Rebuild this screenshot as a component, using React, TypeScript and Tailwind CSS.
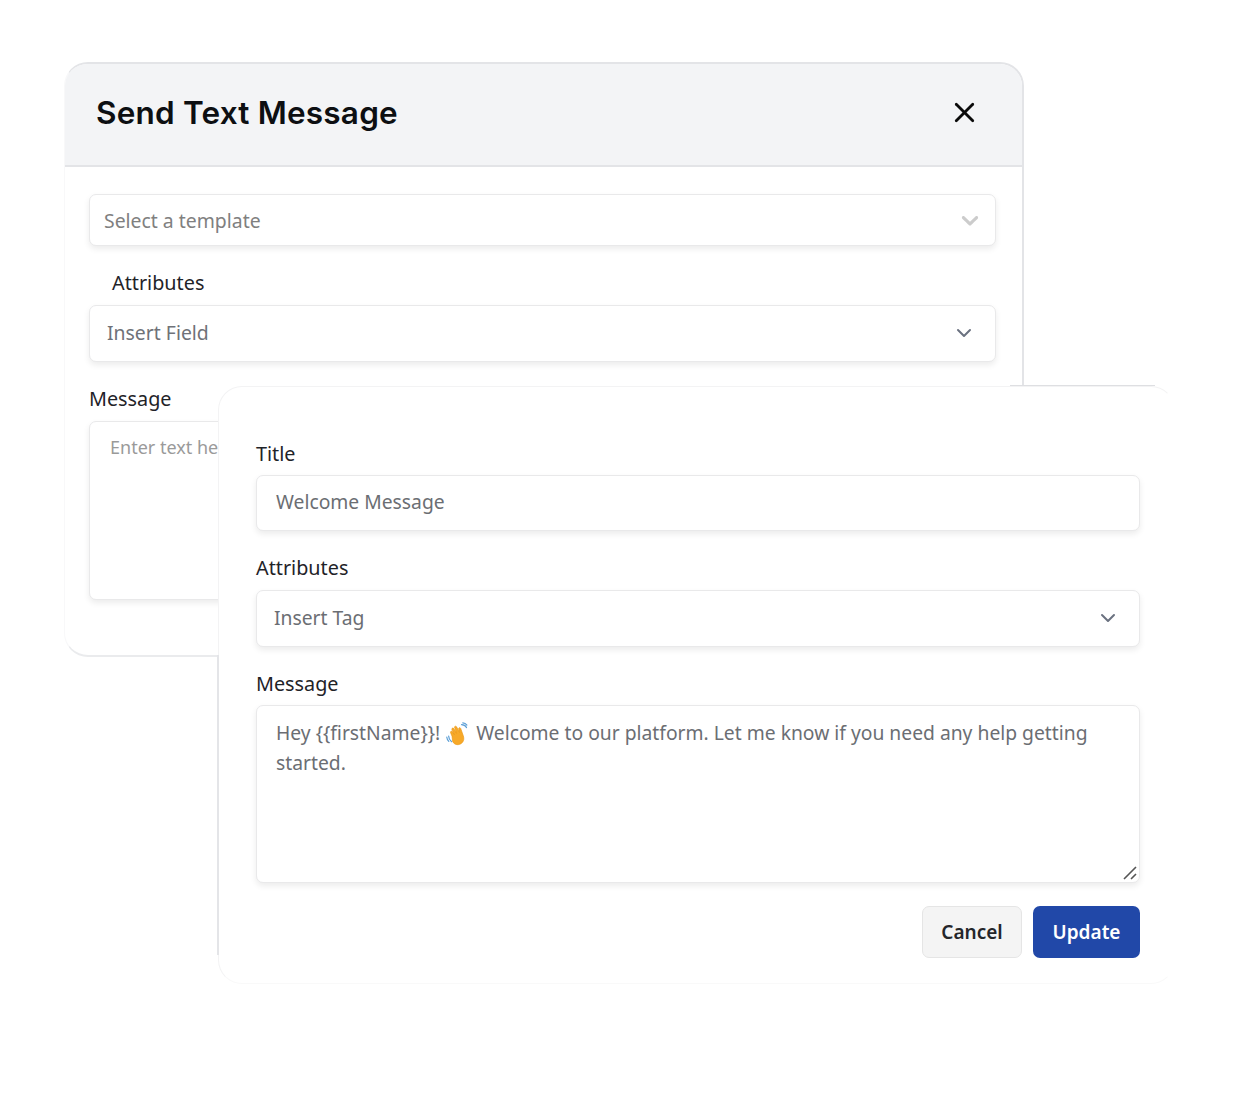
import { ChevronDown, X } from "lucide-react";
import React from "react";

const WaveIcon = () => (
  <svg
    viewBox="0 0 24 24"
    className="mx-[6px] inline-block h-[24px] w-[24px] align-[-6px]"
    aria-hidden="true"
  >
    {/* motion lines */}
    <path d="M2.600 14c.1 2.400 1.200 4.300 3 5.700M.8 15.200c.2 1.700.9 3.100 2 4.200" fill="none" stroke="#5c9fd6" strokeWidth="1.200" strokeLinecap="round" />
    <path d="M15.500 2.600c2.200 0 4.100 1.200 5 3M16.800.8c1.700.1 3.200 1 4.100 2.300" fill="none" stroke="#5c9fd6" strokeWidth="1.200" strokeLinecap="round" />
    {/* hand */}
    <path
      d="M6 14.200 4.500 10.600c-.5-1.200 1.200-2 1.900-.9l1.900 3-2.400-5.200c-.5-1.200 1.200-2 1.900-.9l2.700 4.700-1.900-5.800c-.4-1.300 1.400-1.900 2-.7l2.900 5.600-.8-3.500c-.3-1.300 1.500-1.800 2-.5l2.600 7.400c1.200 3.500.2 6.600-2.700 8.100-3.100 1.600-6.300.6-7.900-2.200z"
      fill="#f7a928"
      stroke="#e8930f"
      strokeWidth=".6"
    />
  </svg>
);

const fieldClass =
  "rounded-[7px] border border-[#e9e9ea] bg-white shadow-[0_3px_6px_rgba(0,0,0,0.08)]";

const NativeChevron = () => (
  <ChevronDown className="h-[24px] w-[24px] text-[#6b7280]" strokeWidth={2} />
);

const Label = ({ children, className = "" }: { children: React.ReactNode; className?: string }) => (
  <div className={`text-[19.800px] leading-[28px] text-[#1f2328] ${className}`}>{children}</div>
);

const SendMessageCard = () => (
  <div className="ml-[64px] h-[595px] w-[960px] rounded-[24px] border-t-2 border-r-2 border-b-2 border-l border-t-[#e3e4e7] border-r-[#e3e4e7] border-b-[#eaebed] border-l-[#f8f8f9] bg-white">
    <div className="flex h-[103px] items-center justify-between rounded-t-[22px] border-b-2 border-[#e3e4e7] bg-[#f3f4f6] pb-[4px] pl-[31px] pr-[41px]">
      <h2 className="font-['Inter',sans-serif] text-[31.500px] font-semibold leading-none tracking-[0.2px] text-[#0d0f12]">
        Send Text Message
      </h2>
      <X className="h-[33px] w-[33px] text-[#0a0a0a]" strokeWidth={2} />
    </div>

    <div className="pl-[24px] pr-[26px] pt-[27px]">
      <div className={`${fieldClass} flex h-[52px] items-center justify-between pl-[14px] pr-[11px]`}>
        <span className="pt-[2px] text-[19.400px] text-[#808080]">Select a template</span>
        <svg viewBox="0 0 20 20" className="h-[28px] w-[28px] fill-[#cccccc]" aria-hidden="true">
          <path d="M4.516 7.548c0.436-0.446 1.043-0.481 1.576 0l3.908 3.747 3.908-3.747c0.533-0.481 1.141-0.446 1.574 0 0.436 0.445 0.408 1.197 0 1.615-0.406 0.418-4.695 4.502-4.695 4.502-0.217 0.223-0.502 0.335-0.787 0.335s-0.57-0.112-0.789-0.335c0 0-4.287-4.084-4.695-4.502s-0.436-1.17 0-1.615z" />
        </svg>
      </div>

      <Label className="ml-[23px] mt-[23px]">Attributes</Label>
      <div className={`${fieldClass} mt-[8px] flex h-[57px] items-center justify-between pb-[2px] pl-[17px] pr-[19px]`}>
        <span className="text-[19.400px] text-[#6f7278]">Insert Field</span>
        <NativeChevron />
      </div>

      <Label className="mt-[23px]">Message</Label>
      <div className={`${fieldClass} mt-[8px] h-[179px] px-[20px] py-[12px] text-[18px] leading-[27px] text-[#9a9a9a]`}>
        Enter text here
      </div>
    </div>
  </div>
);

const EditTemplateCard = () => (
  <div className="absolute left-[218px] top-[386px] h-[598px] w-[957px] rounded-[24px] border border-[#f3f3f4] border-r-white border-b-[#f9f9f9] bg-white pl-[37px] pr-[34px] pt-[53px]">
    <Label>Title</Label>
    <div className={`${fieldClass} mt-[7px] flex h-[56px] items-center pb-[2px] pl-[19px] text-[19.300px] text-[#6b6e73]`}>
      Welcome Message
    </div>

    <Label className="mt-[23px]">Attributes</Label>
    <div className={`${fieldClass} mt-[8px] flex h-[57px] items-center justify-between pb-[1px] pl-[17px] pr-[19px]`}>
      <span className="text-[19.300px] text-[#6b6e73]">Insert Tag</span>
      <NativeChevron />
    </div>

    <Label className="mt-[23px]">Message</Label>
    <div className={`${fieldClass} relative mt-[7px] h-[178px] px-[19px] py-[12px] text-[19.300px] leading-[30px] text-[#6b6e73]`}>
      Hey {"{{firstName}}"}!<WaveIcon />Welcome to our platform. Let me know if you need any help getting started.
      <svg viewBox="0 0 14 14" className="absolute bottom-[2px] right-[2px] h-[14px] w-[14px]" aria-hidden="true">
        <path d="M1 13 13 1M8 13l5-5" stroke="#555" strokeWidth="1.600" fill="none" />
      </svg>
    </div>

    <div className="mt-[23px] flex justify-end gap-[11px]">
      <button className="h-[52px] w-[100px] rounded-[7px] border border-[#e5e5e5] bg-[#f4f4f4] text-[19px] font-semibold text-[#24262a]">
        Cancel
      </button>
      <button className="h-[52px] w-[107px] rounded-[7px] bg-[#2148a8] text-[19px] font-semibold text-white">
        Update
      </button>
    </div>
  </div>
);

export default function App() {
  return (
    <div className="relative h-[1108px] w-[1240px] overflow-hidden bg-white pt-[62px] font-['Noto_Sans',sans-serif]">
      <SendMessageCard />
      <EditTemplateCard />
      {/* darker edges of the front card where it leaves the back card */}
      <div className="absolute left-[217px] top-[655px] h-[300px] w-[2px] bg-[#e4e5e8]" />
      <div className="absolute left-[1010px] top-[385px] h-px w-[145px] bg-[#dedfe2]" />
    </div>
  );
}
